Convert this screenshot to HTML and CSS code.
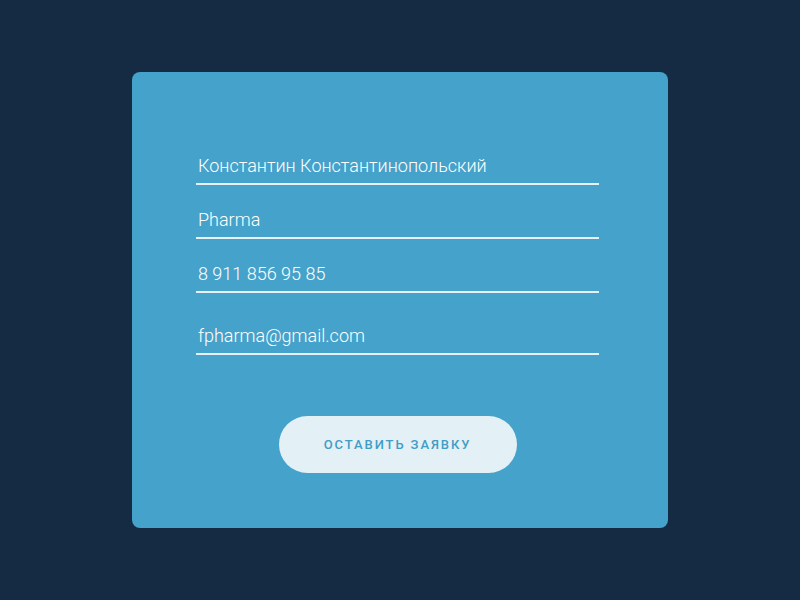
FILE: index.html
```html
<!DOCTYPE html>
<html lang="ru">

<head>
    <meta charset="UTF-8">
    <meta name="viewport" content="width=device-width, initial-scale=1.0">
    <title>Заявка</title>
    <link rel="stylesheet" href="styles.css">
</head>

<body>
    <form class="card">
        <div class="field">
            <input type="text" class="field-input" value="Константин Константинопольский">
        </div>
        <div class="field">
            <input type="text" class="field-input" value="Pharma">
        </div>
        <div class="field">
            <input type="text" class="field-input" value="8 911 856 95 85">
        </div>
        <div class="field field-email">
            <input type="text" class="field-input" value="fpharma@gmail.com">
        </div>
        <div class="actions">
            <button type="button" class="submit">Оставить заявку</button>
        </div>
    </form>
</body>

</html>
```

FILE: styles.css
```css
* {
    box-sizing: border-box;
}

body {
    margin: 0;
    width: 100vw;
    height: 100vh;
    display: flex;
    justify-content: center;
    align-items: center;
    background: #152a43;
    font-family: Roboto, "Liberation Sans", sans-serif;
    overflow: hidden;
}

.card {
    width: 536px;
    padding: 82px 69px 55px 64px;
    background: #45a2ca;
    border-radius: 8px;
    display: flex;
    flex-direction: column;
    gap: 23px;
}

.field {
    border-bottom: 2px solid #e6f0f5;
    padding: 0 0 5px 2px;
}

.field-email {
    margin-top: 8px;
}

.field-input {
    display: block;
    width: 100%;
    height: 24px;
    padding: 0;
    border: none;
    outline: none;
    background: transparent;
    color: #ffffff;
    font-family: inherit;
    font-size: 18px;
    font-weight: 300;
    line-height: 24px;
}

.actions {
    margin-top: 38px;
    display: flex;
    justify-content: center;
}

.submit {
    width: 238px;
    height: 57px;
    border: none;
    border-radius: 29px;
    background: #e3f0f6;
    color: #3f9dc6;
    font-family: inherit;
    font-size: 13px;
    font-weight: 500;
    letter-spacing: 1.9px;
    text-transform: uppercase;
    cursor: pointer;
}
```
